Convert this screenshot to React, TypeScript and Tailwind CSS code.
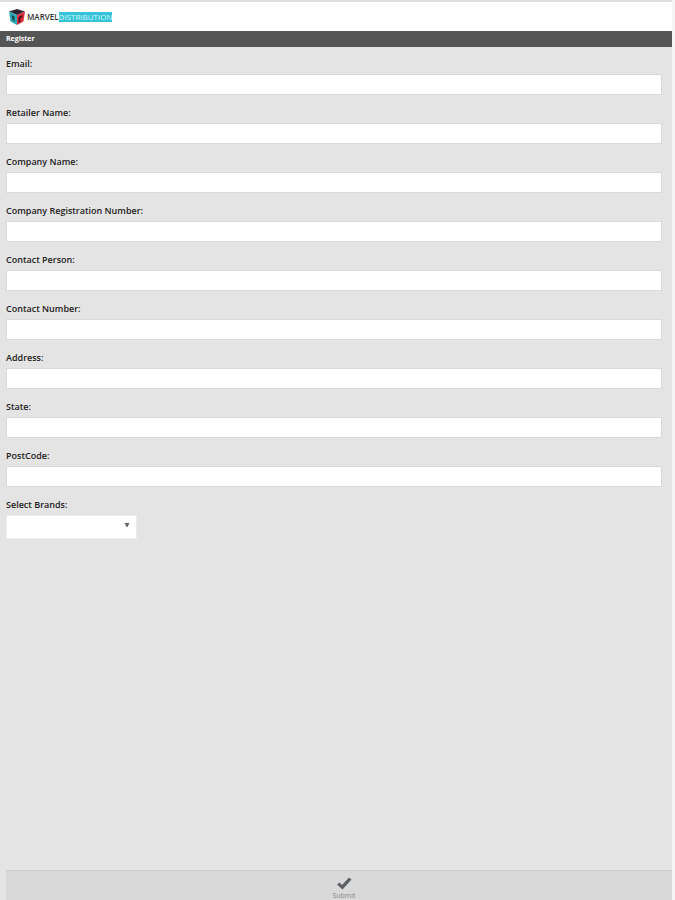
import React from 'react';

interface Field {
  id: string;
  label: string;
  type?: string;
}

const fields: Field[] = [
  { id: 'email', label: 'Email:', type: 'email' },
  { id: 'retailer', label: 'Retailer Name:' },
  { id: 'company', label: 'Company Name:' },
  { id: 'registration', label: 'Company Registration Number:' },
  { id: 'person', label: 'Contact Person:' },
  { id: 'phone', label: 'Contact Number:', type: 'tel' },
  { id: 'address', label: 'Address:' },
  { id: 'state', label: 'State:' },
  { id: 'postcode', label: 'PostCode:' },
];

const CubeLogo = () => (
  <svg viewBox="0 0 18 18" className="h-[18px] w-[18px]" aria-hidden="true">
    <path d="M1 3.5 9 1l8 2.500L9 7z" fill="#2b2730" />
    <path d="M1 3.5 9 7v10l-6.500-3.500z" fill="#2aa9b8" />
    <path d="M17 3.5 9 7v10l6.500-3.500z" fill="#e0313f" />
    <path d="M3.500 7 6.500 8.500v5L4.500 12z" fill="#1f4650" />
    <path d="M10.500 9 14.500 7v2L12.500 10.500v3.500L10.500 15z" fill="#4d1420" />
  </svg>
);

const Label = ({ htmlFor, children }: { htmlFor: string; children: React.ReactNode }) => (
  <label htmlFor={htmlFor} className="block h-[18px] text-[9px] leading-[16px] font-semibold text-[#222]">
    {children}
  </label>
);

export default function App() {
  return (
    <div className="min-h-screen bg-[#f5f5f5] pr-[3px] font-['Open_Sans','Noto_Sans',sans-serif]">
      <div className="flex min-h-screen flex-col bg-[#e4e4e4]">
        <header className="flex h-[31px] items-center gap-px border-t-2 border-[#e0e0e0] bg-white pl-2">
          <CubeLogo />
          <div className="flex items-center text-[8px] leading-[10px]">
            <span className="font-semibold text-[#333]">MARVEL</span>
            <span className="bg-[#35c4d7] text-[#d5f6fa]">DISTRIBUTION</span>
          </div>
        </header>
        <h1 className="h-4 bg-[#555] pl-1.5 text-[7px] leading-4 font-bold text-white">Register</h1>

        <form className="flex flex-1 flex-col pl-1.5">
          <div className="flex flex-col gap-2.5 pt-[9px] pr-2.5">
            {fields.map((field) => (
              <div key={field.id}>
                <Label htmlFor={field.id}>{field.label}</Label>
                <input
                  id={field.id}
                  name={field.id}
                  type={field.type ?? 'text'}
                  className="block h-[21px] w-full border border-[#dadada] bg-white px-1 text-[9px] outline-none"
                />
              </div>
            ))}
            <div>
              <Label htmlFor="brands">Select Brands:</Label>
              <div className="relative w-[131px]">
                <select
                  id="brands"
                  name="brands"
                  className="block h-6 w-full appearance-none border border-[#ececec] bg-white px-1 text-[9px] outline-none"
                >
                  <option value=""></option>
                </select>
                <svg viewBox="0 0 6 4" className="pointer-events-none absolute top-2 right-[7px] h-1 w-1.5" aria-hidden="true">
                  <path d="M.5 0h5L3.500 4h-1z" fill="#666" />
                </svg>
              </div>
            </div>
          </div>

          <button
            type="submit"
            className="mt-auto flex h-[30px] flex-col items-center border-t border-[#cbcbcb] bg-[#d9d9d9] pt-1.5 pl-2.5 text-[7px] leading-[12px] text-[#888]"
          >
            <svg viewBox="0 0 16 13" className="h-[13px] w-4 shrink-0" aria-hidden="true">
              <path d="m1 7.500 2.500-2L6 8l7-7.500L15.500 2.500 6.500 12.500z" fill="#5c6065" />
            </svg>
            Submit
          </button>
        </form>
      </div>
    </div>
  );
}
